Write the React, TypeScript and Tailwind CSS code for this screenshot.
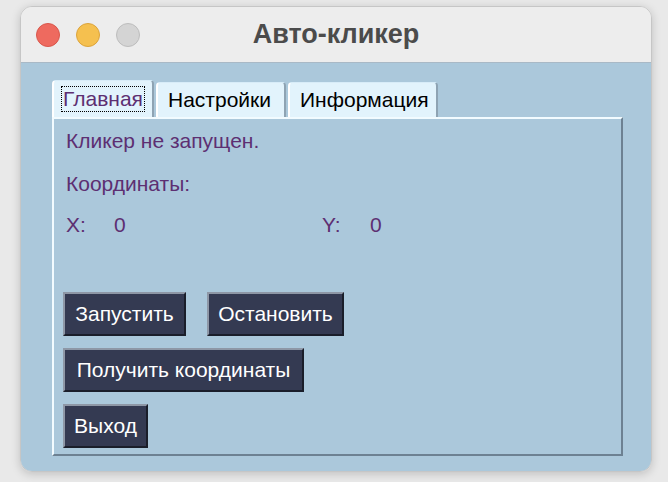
import { useState } from 'react';

const tabs = [
  { label: 'Главная', w: 'w-[102px]' },
  { label: 'Настройки', w: 'w-[130px]' },
  { label: 'Информация', w: 'w-[150px]' },
];

function Btn({ label, w }: { label: string; w: string }) {
  return (
    <button
      className={`${w} h-[44px] border-2 border-t-[#8e97a6] border-l-[#8e97a6] border-b-[#1a1e2a] border-r-[#1a1e2a] bg-[#343a52] text-[21px] text-white`}
    >
      {label}
    </button>
  );
}

export default function App() {
  const [active] = useState(0);

  return (
    <div
      className="h-[482px] w-[668px] overflow-hidden bg-[#e9e9e9] pl-[20px] pt-[6px]"
      style={{ fontFamily: '"Liberation Sans", Arial, sans-serif' }}
    >
      <div className="flex h-[466px] w-[632px] flex-col overflow-hidden rounded-[12px] border border-[#c6c6c6] shadow-[0_2px_10px_rgba(0,0,0,0.18)]">
        {/* title bar */}
        <div className="relative flex h-[56px] shrink-0 items-center border-b border-[#a9b9c6] bg-[#ededed] pl-[15px]">
          <div className="flex gap-[16px]">
            <span className="h-[24px] w-[24px] rounded-full border border-[#d9574c] bg-[#ee6a5f]" />
            <span className="h-[24px] w-[24px] rounded-full border border-[#dca43c] bg-[#f5c04f]" />
            <span className="h-[24px] w-[24px] rounded-full border border-[#bdbdbd] bg-[#d4d4d4]" />
          </div>
          <div className="absolute inset-0 flex items-center justify-center text-[27px] font-bold text-[#4b4b4b]">
            Авто-кликер
          </div>
        </div>

        {/* body */}
        <div className="flex-1 bg-[#abc8db] pl-[31px] pt-[17px]">
          <div className="flex h-[37px] items-end">
            {tabs.map((t, i) => (
              <div
                key={t.label}
                className={`${t.w} mr-[2px] flex items-center rounded-t-[4px] border-l-2 border-r-2 border-t border-l-white border-r-[#8ea3b3] border-t-[#d8ecf8] bg-[#e2f3fc] pl-[7px] text-[21px] ${
                  i === active ? 'h-[37px] text-[#5d2f72]' : 'h-[35px] pl-[10px] text-black'
                }`}
              >
                <span className={i === active ? 'border border-dotted border-black px-[1px] leading-[24px]' : 'leading-[24px]'}>
                  {t.label}
                </span>
              </div>
            ))}
          </div>

          <div className="flex h-[339px] w-[571px] flex-col border-2 border-b-[#6d8192] border-l-[#f2fbff] border-r-[#6d8192] border-t-[#f2fbff] text-[21px] text-[#5d2f72]">
            <div className="pl-[12px] pt-[10px] leading-[24px]">Кликер не запущен.</div>
            <div className="pl-[12px] pt-[19px] leading-[24px]">Координаты:</div>
            <div className="flex pl-[12px] pt-[17px] leading-[24px]">
              <span className="w-[48px]">X:</span>
              <span className="w-[208px]">0</span>
              <span className="w-[48px]">Y:</span>
              <span>0</span>
            </div>

            <div className="flex flex-col gap-[12px] pl-[9px] pt-[55px]">
              <div className="flex gap-[21px]">
                <Btn label="Запустить" w="w-[123px]" />
                <Btn label="Остановить" w="w-[137px]" />
              </div>
              <div className="flex">
                <Btn label="Получить координаты" w="w-[241px]" />
              </div>
              <div className="flex">
                <Btn label="Выход" w="w-[85px]" />
              </div>
            </div>
          </div>
        </div>
      </div>
    </div>
  );
}
